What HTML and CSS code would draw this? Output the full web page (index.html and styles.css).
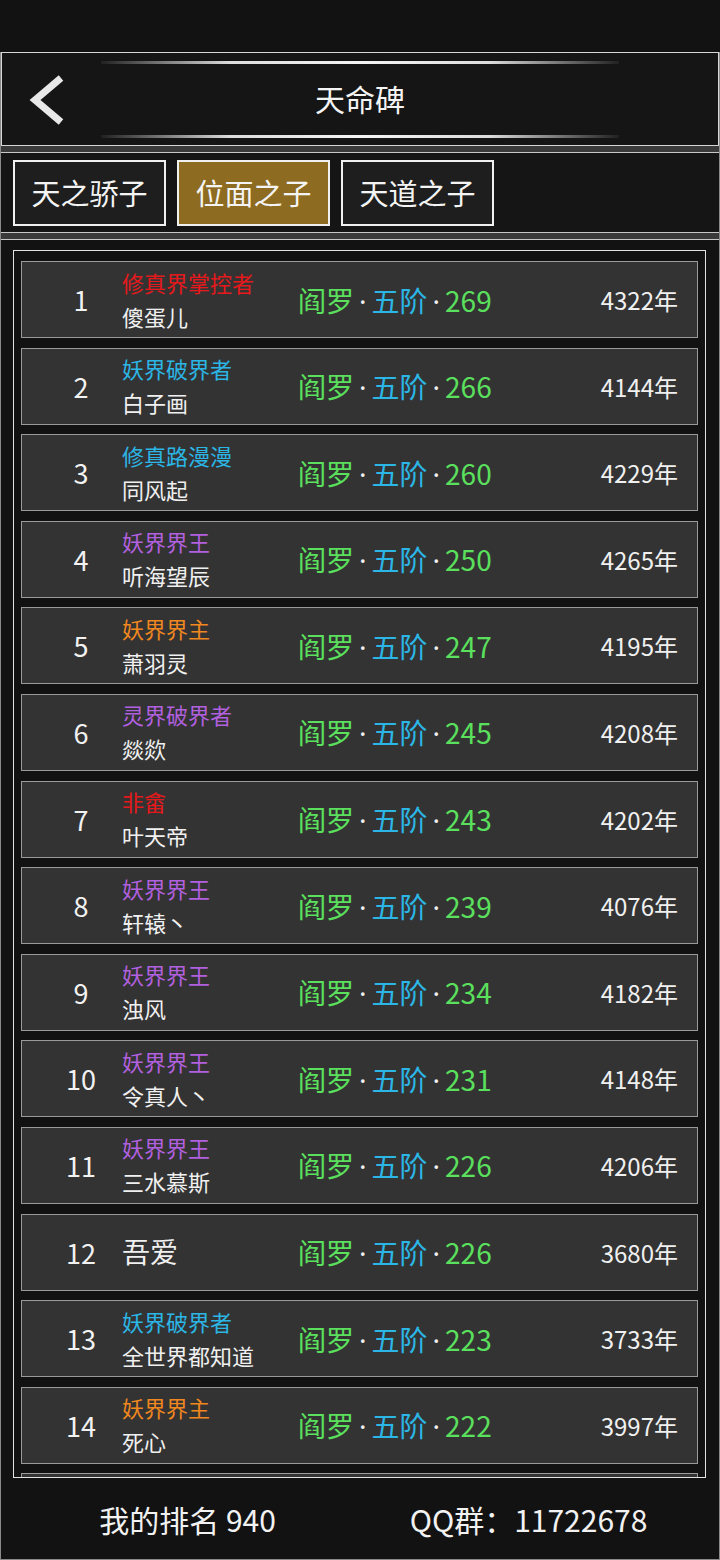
FILE: index.html
```html
<!DOCTYPE html>
<html lang="zh-CN">
<head>
    <meta charset="UTF-8">
    <meta name="viewport" content="width=device-width, initial-scale=1.0">
    <title>天命碑</title>
    <link rel="stylesheet" href="styles.css">
</head>
<body>
    <div class="status"></div>
    <div class="page">
        <header class="topbar">
            <span class="deco"></span>
            <div class="bar-row">
                <a class="back" href="#">
                    <svg width="40" height="52" viewBox="0 0 40 52">
                        <polyline points="34,4 8,26 34,48" fill="none" stroke="#e8e8e8" stroke-width="7"/>
                    </svg>
                </a>
                <h1>天命碑</h1>
                <span></span>
            </div>
            <span class="deco"></span>
        </header>
        <div class="band"></div>
        <nav class="tabs">
            <button class="tab">天之骄子</button>
            <button class="tab active">位面之子</button>
            <button class="tab">天道之子</button>
        </nav>
        <div class="band"></div>
        <div class="list-area">
            <div class="list" id="list"></div>
        </div>
        <footer class="footer">
            <span>我的排名 940</span>
            <span>QQ群：11722678</span>
        </footer>
    </div>

    <script>
        // rank data: title, title colour, name, level, years
        const rows = [
            ["修真界掌控者", "red", "傻蛋儿", 269, 4322],
            ["妖界破界者", "blue", "白子画", 266, 4144],
            ["修真路漫漫", "blue", "同风起", 260, 4229],
            ["妖界界王", "purple", "听海望辰", 250, 4265],
            ["妖界界主", "orange", "萧羽灵", 247, 4195],
            ["灵界破界者", "purple", "燚欻", 245, 4208],
            ["非畲", "red", "叶天帝", 243, 4202],
            ["妖界界王", "purple", "轩辕丶", 239, 4076],
            ["妖界界王", "purple", "浊风", 234, 4182],
            ["妖界界王", "purple", "令真人丶", 231, 4148],
            ["妖界界王", "purple", "三水慕斯", 226, 4206],
            ["", "", "吾爱", 226, 3680],
            ["妖界破界者", "blue", "全世界都知道", 223, 3733],
            ["妖界界主", "orange", "死心", 222, 3997]
        ];

        const list = document.getElementById("list");
        rows.forEach(function (r, i) {
            const row = document.createElement("div");
            row.className = "row";
            const who = r[0]
                ? `<div class="who"><span class="title ${r[1]}">${r[0]}</span><span class="name">${r[2]}</span></div>`
                : `<div class="who"><span class="name big">${r[2]}</span></div>`;
            row.innerHTML = `<span class="rank">${i + 1}</span>${who}
                <span class="level"><span class="green">阎罗</span><span class="dot">·</span><span class="blue">五阶</span><span class="dot">·</span><span class="green">${r[3]}</span></span>
                <span class="years">${r[4]}年</span>`;
            list.appendChild(row);
        });

        // next row peeks in under the scroll edge
        const more = document.createElement("div");
        more.className = "row";
        list.appendChild(more);
    </script>
</body>
</html>
```

FILE: styles.css
```css
* {
    box-sizing: border-box;
}

body {
    margin: 0;
    background: #121212;
    color: #f2f2f2;
    font-family: "Noto Sans CJK SC", "Noto Sans", sans-serif;
}

.status {
    height: 52px;
}

.page {
    border-left: 1px solid #8a8a8a;
    border-right: 1px solid #8a8a8a;
    border-bottom: 1px solid #8a8a8a;
}

/* header */
.topbar {
    height: 94px;
    border: 1px solid #d6d6d6;
    background: #151515;
    display: flex;
    flex-direction: column;
    padding: 8px 0 7px;
}

.deco {
    display: block;
    height: 3px;
    margin: 0 99px;
    background: linear-gradient(to right, rgba(255,255,255,0.05), rgba(255,255,255,0.85) 25%, #f4f4f4 50%, rgba(255,255,255,0.85) 75%, rgba(255,255,255,0.05));
}

.bar-row {
    flex: 1;
    display: grid;
    grid-template-columns: 1fr auto 1fr;
    align-items: center;
    padding-bottom: 3px;
}

.back {
    display: flex;
    padding-left: 25px;
    padding-top: 3px;
}

.topbar h1 {
    margin: 0;
    font-size: 30px;
    font-weight: 400;
    color: #f4f4f4;
}

.band {
    height: 7px;
    background: #3a3a3a;
    border-bottom: 1px solid #c8c8c8;
}

/* tabs */
.tabs {
    display: flex;
    gap: 11px;
    padding: 7px 12px 6px;
    background: #151515;
    border-bottom: 1px solid #c8c8c8;
}

.tab {
    width: 153px;
    height: 66px;
    border: 2px solid #f0f0f0;
    background: #1e1e1e;
    color: #f4f4f4;
    font-family: inherit;
    font-size: 29px;
    padding: 0 0 2px;
}

.tab.active {
    background: #8d6b20;
}

/* list */
.list-area {
    padding: 10px 13px 0 12px;
}

.list {
    height: 1228px;
    border: 1px solid #e2e2e2;
    padding: 10px 7px 0;
    overflow: hidden;
    display: flex;
    flex-direction: column;
    gap: 9.6px;
}

.row {
    flex: none;
    height: 77px;
    background: #333333;
    border: 1px solid #9a9a9a;
    display: grid;
    grid-template-columns: 100px 176px 1fr auto;
    align-items: center;
    padding-right: 19px;
}

.rank {
    padding-left: 18px;
    text-align: center;
    font-size: 27px;
}

.who {
    display: flex;
    flex-direction: column;
    line-height: 34px;
    margin-top: -2px;
}

.title {
    font-size: 22px;
}

.name {
    font-size: 22px;
    color: #f0f0f0;
}

.name.big {
    font-size: 28px;
}

.level {
    font-size: 28px;
}

.dot {
    font-family: "Noto Sans", sans-serif;
    color: #f0f0f0;
    margin: 0 5px;
}

.years {
    font-size: 24px;
    color: #f0f0f0;
}

.green { color: #5be05d; }
.blue { color: #2bb6e6; }
.red { color: #e5191c; }
.purple { color: #b160df; }
.orange { color: #f0871f; }

/* footer */
.footer {
    height: 81px;
    display: flex;
    align-items: center;
    padding: 0 20px 0 16px;
    font-size: 30px;
    color: #f2f2f2;
}

.footer span {
    flex: 1;
    text-align: center;
}
```
